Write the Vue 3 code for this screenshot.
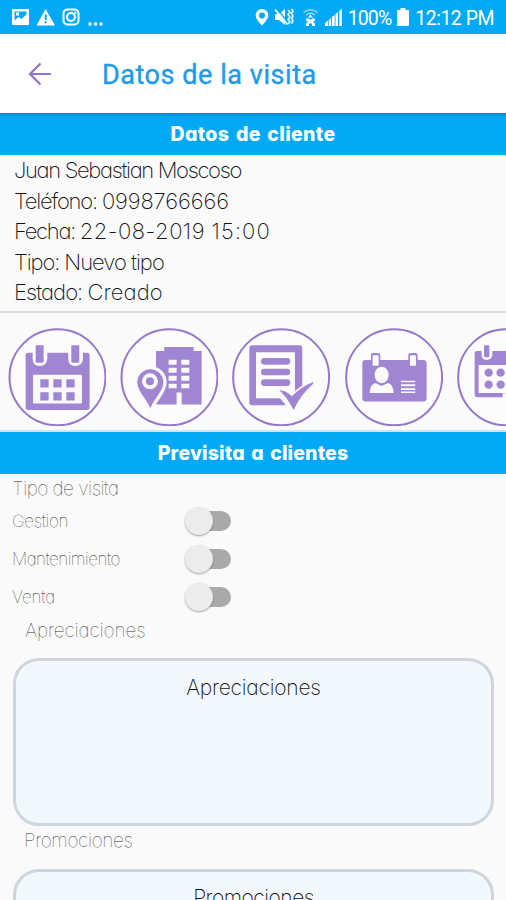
<script setup>
const info = [
  [{ text: 'Juan Sebastian Moscoso', tracking: -1.34 }],
  [{ text: 'Teléfono: ', tracking: -1.2 }, { text: '0998766666', tracking: -0.12 }],
  [{ text: 'Fecha: ', tracking: -1.3 }, { text: '22-08-2019 ', tracking: 0.45 }, { text: '15:00', tracking: 1.1 }],
  [{ text: 'Tipo: ', tracking: -1.1 }, { text: 'Nuevo tipo', tracking: -1 }],
  [{ text: 'Estado: ', tracking: -0.95 }, { text: 'Creado', tracking: 0.1 }],
]
const switches = [
  { text: 'Gestion', tracking: -0.3 },
  { text: 'Mantenimiento', tracking: -0.5 },
  { text: 'Venta', tracking: -0.1 },
]
</script>

<template>
  <div class="screen">
    <header class="status">
      <svg class="status-left" viewBox="0 0 110 34" width="110" height="34">
        <path fill="#fff" fill-rule="evenodd" d="M13 9h15a1 1 0 0 1 1 1v14a1 1 0 0 1-1 1H13a1 1 0 0 1-1-1V10a1 1 0 0 1 1-1zM14.500 11.500v9l4-3.500 3 2 5-4.500v-3zM16 12.500h3v3h-3z" />
        <path fill="#fff" d="M45.500 9L55 25.500H36.500z" />
        <path stroke="#03a9f4" stroke-width="2" d="M45.700 14.500v5.500M45.700 21.300v2" />
        <g fill="none" stroke="#fff" stroke-width="2"><rect x="63.500" y="9.500" width="15" height="15" rx="4" /><circle cx="71" cy="17" r="4" /></g>
        <circle cx="75.500" cy="12.700" r="1.100" fill="#fff" />
        <path fill="#fff" d="M88.500 22.500h3v3h-3zM94 22.500h3v3h-3zM99.500 22.500h3v3h-3z" />
      </svg>
      <div class="status-right">
        <svg viewBox="254 0 90 34" width="90" height="34">
          <path fill="#fff" fill-rule="evenodd" d="M262 9a6.300 6.300 0 0 1 6.300 6.300c0 4-4.300 7.700-6.300 10.400-2-2.700-6.300-6.400-6.300-10.400A6.300 6.300 0 0 1 262 9zm0 3.400a3 3 0 1 0 0 6 3 3 0 0 0 0-6z" />
          <path fill="#fff" d="M275 14h4l6-5v16l-6-5h-4z" />
          <path stroke="#03a9f4" stroke-width="1.200" d="M277 9l12 14.500" />
          <path stroke="#fff" stroke-width="1.800" d="M275 9.500l12.500 15" />
          <path fill="none" stroke="#fff" stroke-width="1.500" d="M288 10l2 2-2 2.500 2 2.500-2 2.500 2 2.500-2 2M291.500 9l1.500 2-1.500 2.500 1.500 2.500-1.500 2.500 1.500 2.500-1.500 2.500" />
          <g fill="none" stroke="#8fd8fa" stroke-width="1.500"><path d="M303.500 12.500q7-5.500 14 0M306 15q4.500-3.500 9 0" /></g>
          <path fill="#fff" d="M310.500 14.500l2.500 3h-5zM306 18.500h3l1.500 1.500 1.500-1.500h3v2l-2 1.500 2 1.500v2.500h-3v-2.500h-3V26h-3v-2.500l2-1.500-2-1.500z" />
          <path fill="#fff" d="M325 23l3-2.500v5.500H325zM328.700 20l2.500-2v8h-2.500zM332 17l2.700-2v11H332zM335.500 14l2.500-2v14H335.500zM339.300 11l2.500-2.500V26h-2.500z" />
        </svg>
        <span class="battery-text">100%</span>
        <svg class="battery" viewBox="0 0 12 18" width="12" height="18"><path fill="#fff" d="M3.500 0h5v2H11a1 1 0 0 1 1 1v14a1 1 0 0 1-1 1H1a1 1 0 0 1-1-1V3a1 1 0 0 1 1-1h2.500z" /></svg>
        <span class="clock">12:12 PM</span>
      </div>
    </header>

    <nav class="toolbar">
      <svg viewBox="0 0 24 24" width="24" height="24" fill="none" stroke="#9273c8" stroke-width="2.200"><path d="M12.500 1.500L2 12l10.500 10.500M2 12h21" /></svg>
      <h1>Datos de la visita</h1>
    </nav>

    <h2 class="band band-first">Datos de cliente</h2>

    <section class="info">
      <p v-for="(line, i) in info" :key="i"><span v-for="part in line" :key="part.text" :style="{ letterSpacing: part.tracking + 'px' }">{{ part.text }}</span></p>
    </section>

    <section class="actions">
      <svg viewBox="22 52 296 296">
        <circle class="ring" cx="170.500" cy="200" r="144" />
        <path d="M82 126h14v18q0 22 21 22t23-22v-18h63v18q0 22 21 22t23-22v-18h12q8 0 8 8v156q0 8-8 8H83q-8 0-8-8V134q0-8 7-8z" />
        <rect x="105" y="104" width="24" height="52" rx="3" /><rect x="212" y="104" width="24" height="52" rx="3" />
        <rect class="paper" x="97" y="192" width="147" height="87" rx="4" />
        <path d="M119 206h25v25h-25zM158 206h25v25h-25zM197 206h25v25h-25zM119 245h25v25h-25zM158 245h25v25h-25zM197 245h25v25h-25z" />
      </svg>
      <svg viewBox="359 52 296 296">
        <circle class="ring" cx="507.500" cy="200" r="144" />
        <path d="M467 121h25v-12h88v12h24v161h-60v-36h-15v36h-62z" />
        <path class="paper" d="M505 147h24v15h-24zM543 147h24v15h-24zM505 171h24v15h-24zM543 171h24v15h-24zM505 195h24v15h-24zM543 195h24v15h-24zM505 219h24v14h-24zM543 219h24v14h-24z" />
        <path stroke="#fafafa" stroke-width="20" paint-order="stroke" d="M450 176a39 39 0 0 1 39 39c0 27-25 46-39 77-14-31-39-50-39-77a39 39 0 0 1 39-39z" />
        <circle class="paper" cx="449" cy="212" r="24" /><circle cx="449" cy="212" r="12" />
      </svg>
      <svg viewBox="38 52 296 296">
        <circle class="ring" cx="185.500" cy="200" r="144" />
        <path fill-rule="evenodd" d="M98 104h143q8 0 8 8v122l-22 13V125H110v138h72l18 21H98q-8 0-8-8V112q0-8 8-8z" />
        <path fill="none" stroke="#a085d3" stroke-width="20" stroke-linecap="round" d="M135 152h68M135 184h68M135 216h68" />
        <path stroke="#fafafa" stroke-width="10" paint-order="stroke" d="M180 239q18-1 38 18 25-27 62-42 5 0 0 6-36 32-57 77-19-37-43-59z" />
      </svg>
      <svg viewBox="375 52 296 296">
        <circle class="ring" cx="522.500" cy="200" r="144" />
        <rect x="427" y="148" width="193" height="125" rx="10" />
        <path d="M453 148v-15q0-6 6-6h16q6 0 6 6v15zM565 148v-15q0-6 6-6h16q6 0 6 6v15z" />
        <rect class="paper" x="458" y="134" width="18" height="31" rx="2" /><rect class="paper" x="570" y="134" width="18" height="31" rx="2" />
        <ellipse class="paper" cx="485" cy="193" rx="21" ry="25" />
        <path class="paper" d="M449 247q0-25 17-30l19 9 19-9q17 5 17 30zM543 210h43v5h-43zM543 221h43v6h-43zM543 233h43v5h-43zM543 243h43v4h-43z" />
      </svg>
      <svg viewBox="712 52 296 296">
        <circle class="ring" cx="859.500" cy="200" r="144" />
        <path fill-rule="evenodd" d="M772 121h14v13q0 14 15 14t17-14v-13h85v127h-54v12H773q-8 0-8-8V129q0-8 7-8zM777 163v84h113v-84z" />
        <rect x="793" y="104" width="16" height="36" rx="4" />
        <circle cx="807" cy="186" r="12.500" /><circle cx="843" cy="186" r="12.500" /><circle cx="807" cy="222" r="12.500" /><circle cx="843" cy="222" r="12.500" />
      </svg>
    </section>

    <h2 class="band band-second">Previsita a clientes</h2>

    <section class="form">
      <h3 class="tipo">Tipo de visita</h3>
      <div v-for="item in switches" :key="item.text" class="row">
        <span class="row-label" :style="{ letterSpacing: item.tracking + 'px' }">{{ item.text }}</span>
        <i class="switch"></i>
      </div>
      <h3 class="inset apre">Apreciaciones</h3>
      <div class="box">Apreciaciones</div>
      <h3 class="inset promo">Promociones</h3>
      <div class="box box-last">Promociones</div>
    </section>
  </div>
</template>

<style>
body { margin: 0; overflow: hidden; }
</style>

<style scoped>
.screen {
  width: 506px; height: 900px; overflow: hidden; display: flex; flex-direction: column;
  background: #fafafa; font-family: Inter, Lato, sans-serif; font-feature-settings: "cv11"; color: #111;
}
.screen > * { flex-shrink: 0; }
h1, h2, h3, p { margin: 0; font-weight: inherit; }
.status { height: 34px; background: #03a9f4; display: flex; justify-content: space-between; font-family: Roboto, sans-serif; color: #fff; }
.status svg { display: block; }
.status-right { display: flex; align-items: center; padding-right: 12px; font-size: 19.5px; white-space: nowrap; }
.status-right span { line-height: 34px; padding-top: 2px; height: 32px; }
.battery-text { margin-left: 4px; letter-spacing: -.9px; }
.clock { letter-spacing: -.5px; }
.battery { margin: 0 6px 0 6px; }
.toolbar { height: 79px; box-sizing: border-box; background: #fff; display: flex; align-items: center; padding: 0 0 0 28px; }
.toolbar h1 { margin-left: 50px; padding-top: 3px; font: 400 27px/32px Roboto, sans-serif; color: #1e9be9; letter-spacing: .55px; -webkit-text-stroke: .4px #1e9be9; }
.band { background: #03a9f4; color: #fff; text-align: center; font-weight: 800; font-size: 19.500px; line-height: 42px; height: 42px; word-spacing: 2px; letter-spacing: .35px; }
.band-first { background: linear-gradient(#0784c6 0, #0598e2 2px, #03a9f4 5px); }
.band-second { letter-spacing: .15px; }
.info { height: 158px; border-bottom: 2px solid #dedede; padding-left: 14px; box-sizing: border-box; font-size: 22px; font-weight: 200; }
.info p { height: 30.500px; line-height: 31px; white-space: pre; }
.actions { height: 119px; padding: 0 0 0 7.500px; display: flex; gap: 13.800px; align-items: flex-start; overflow: hidden; border-bottom: 2px solid #d3e3ec; box-sizing: border-box; }
.actions svg { width: 98.600px; height: 98.600px; flex: none; fill: #a085d3; margin-top: 14.500px; }
.actions .ring { fill: #fcfcfc; stroke: #9378cb; stroke-width: 6; }
.actions .paper { fill: #fafafa; }
.form { padding: 0 12px; }
h3 { font-size: 19px; line-height: 29px; height: 29px; font-weight: 100; color: #333; white-space: nowrap; }
.tipo { height: 28px; letter-spacing: -.52px; }
.row { height: 38px; display: flex; align-items: center; }
.row-label { width: 174px; font-size: 17px; font-weight: 100; color: #222; white-space: nowrap; }
.switch { width: 45px; height: 20px; border-radius: 10px; background: #aaa; position: relative; }
.switch::before { content: ""; position: absolute; left: -1px; top: -4px; width: 28px; height: 28px; border-radius: 50%; background: #ececec; box-shadow: 0 1px 2px rgba(0, 0, 0, .35); }
.inset { padding-left: 12px; }
.apre { padding-left: 13px; letter-spacing: -.1px; }
.promo { height: 30px; letter-spacing: -.35px; }
.box { height: 168px; box-sizing: border-box; margin: 13px 0 0 1px; border: 3px solid #ced5dc; border-radius: 26px; background: #f3f8fc; text-align: center; font-size: 21px; font-weight: 200; line-height: 28px; padding-top: 12.500px; letter-spacing: -.22px; }
.box-last { padding-top: 12px; letter-spacing: -.5px; }
</style>
